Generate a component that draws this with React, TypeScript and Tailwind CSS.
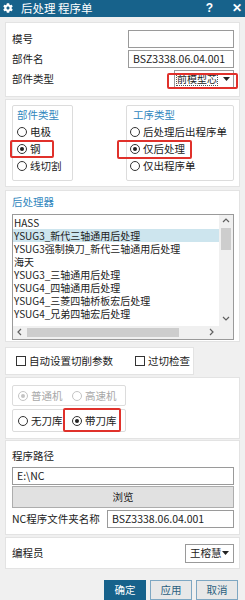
import { FaCog } from "react-icons/fa"

const font = "font-['Noto_Sans_CJK_SC','Noto_Sans',sans-serif]"

const Radio = ({ label, checked, disabled }: { label: string; checked?: boolean; disabled?: boolean }) => (
  <div className="flex items-center gap-[3px] h-[17px] whitespace-nowrap">
    <span
      className={`w-[10px] h-[10px] rounded-full border bg-white flex items-center justify-center shrink-0 ${
        disabled ? "border-[#c4c4c4]" : "border-[#333]"
      }`}
    >
      {checked && <span className={`w-[4px] h-[4px] rounded-full ${disabled ? "bg-[#c4c4c4]" : "bg-[#222]"}`} />}
    </span>
    <span className={disabled ? "text-[#a8a8a8]" : "text-[#222]"}>{label}</span>
  </div>
)

const Check = ({ label }: { label: string }) => (
  <div className="flex items-center gap-[3px] whitespace-nowrap">
    <span className="w-[10px] h-[10px] border border-[#333] bg-white shrink-0" />
    <span>{label}</span>
  </div>
)

const Chevron = ({ dir }: { dir: "up" | "down" | "left" | "right" }) => {
  const d = {
    up: "M1 5 L4 2 L7 5",
    down: "M1 2 L4 5 L7 2",
    left: "M5 1 L2 4 L5 7",
    right: "M2 1 L5 4 L2 7",
  }[dir]
  return (
    <svg width="8" height="8" viewBox="0 0 8 8">
      <path d={d} fill="none" stroke="#606060" strokeWidth="1.2" />
    </svg>
  )
}

const RedBox = ({ className }: { className: string }) => (
  <div className={`absolute border-2 border-[#e0312b] rounded-[2px] pointer-events-none ${className}`} />
)

const posts = [
  "HASS",
  "YSUG3_新代三轴通用后处理",
  "YSUG3强制换刀_新代三轴通用后处理",
  "海天",
  "YSUG3_三轴通用后处理",
  "YSUG4_四轴通用后处理",
  "YSUG4_三菱四轴桥板宏后处理",
  "YSUG4_兄弟四轴宏后处理",
]

export default function App() {
  return (
    <div className={`w-[245px] h-[600px] bg-[#f0f0f0] flex flex-col text-[10.5px] leading-none text-[#222] ${font}`}>
      {/* title bar */}
      <div className="h-[17px] bg-[#17628b] flex items-center pl-[3px] pr-[3px] text-white">
        <FaCog size={10} />
        <span className="ml-[8px] text-[11.5px]">后处理 程序单</span>
        <span className="ml-auto font-bold text-[12px] mr-[19px] font-['Liberation_Sans',sans-serif]">?</span>
        <span className="font-bold text-[12px] font-['Liberation_Sans',sans-serif]">✕</span>
      </div>

      {/* part info */}
      <div className="relative mt-[5px] mx-[5px] h-[75px] bg-white border border-[#e3e3e3] pt-[7px] pl-[6px] pr-[5px] flex flex-col gap-[2px]">
        <div className="flex items-center justify-between h-[18px]">
          <span>模号</span>
          <div className="w-[106px] h-[18px] border border-[#9a9a9a]" />
        </div>
        <div className="flex items-center justify-between h-[18px]">
          <span>部件名</span>
          <div className="w-[106px] h-[18px] border border-[#9a9a9a] flex items-center px-[4px]">BSZ3338.06.04.001</div>
        </div>
        <div className="flex items-center justify-between h-[19px]">
          <span>部件类型</span>
          <div className="w-[60px] h-[19px] border border-[#9a9a9a] flex items-center pl-[1px] pr-[3px] whitespace-nowrap">
            <span className="border border-dotted border-[#555] h-[13px] flex items-center text-[10px]">前模型芯</span>
            <svg className="ml-auto shrink-0" width="7" height="4" viewBox="0 0 7 4">
              <path d="M0 0 H7 L3.5 4 Z" fill="#222" />
            </svg>
          </div>
        </div>
        <RedBox className="left-[161px] top-[50px] w-[71px] h-[16px]" />
      </div>

      {/* type groups */}
      <div className="mt-[2px] mx-[5px] h-[88px] bg-white border border-[#e3e3e3] pt-[5px] pl-[6px] pr-[5px] flex">
        <div className="relative w-[61px] h-[76px] border border-[#dcdcdc] rounded-[2px] pl-[4px] pt-[3px]">
          <div className="text-[#2f86bd] h-[13px] flex items-center mb-[2px]">部件类型</div>
          <Radio label="电极" />
          <Radio label="钢" checked />
          <Radio label="线切割" />
          <RedBox className="left-[-3px] top-[34px] w-[44px] h-[18px]" />
        </div>
        <div className="relative ml-auto w-[108px] h-[76px] border border-[#dcdcdc] rounded-[2px] pl-[3px] pt-[3px]">
          <div className="text-[#2f86bd] h-[13px] flex items-center mb-[2px] pl-[3px]">工序类型</div>
          <Radio label="后处理后出程序单" />
          <Radio label="仅后处理" checked />
          <Radio label="仅出程序单" />
          <RedBox className="left-[-10px] top-[34px] w-[75px] h-[19px]" />
        </div>
      </div>

      {/* post processor list */}
      <div className="mt-[3px] mx-[5px] h-[153px] bg-white border border-[#e3e3e3] pt-[5px] pl-[6px] pr-[5px] flex flex-col">
        <div className="text-[#2f86bd] h-[13px] flex items-center">后处理器</div>
        <div className="mt-[5px] h-[126px] border border-[#9a9a9a] flex flex-col overflow-hidden">
          <div className="flex flex-1 min-h-0">
            <div className="flex-1 overflow-hidden pt-[1px] text-[10px]">
              {posts.map((p, i) => (
                <div
                  key={p}
                  className={`h-[13px] leading-[13px] pl-[1px] whitespace-nowrap ${i === 1 ? "bg-[#cde5ee]" : ""}`}
                >
                  {p}
                </div>
              ))}
            </div>
            <div className="w-[14px] bg-[#f0f0f0] flex flex-col items-center">
              <div className="h-[13px] flex items-center">
                <Chevron dir="up" />
              </div>
              <div className="w-[10px] h-[22px] bg-[#cdcdcd]" />
              <div className="mt-auto h-[13px] flex items-center">
                <Chevron dir="down" />
              </div>
            </div>
          </div>
          <div className="h-[13px] bg-[#f0f0f0] flex items-center">
            <div className="w-[14px] flex justify-center">
              <Chevron dir="left" />
            </div>
            <div className="w-[152px] h-[9px] bg-[#cdcdcd]" />
            <div className="ml-auto w-[14px] flex justify-center">
              <Chevron dir="right" />
            </div>
            <div className="w-[14px]" />
          </div>
        </div>
      </div>

      {/* checkboxes */}
      <div className="mt-[5px] ml-[5px] w-[189px] h-[28px] bg-white border border-[#e3e3e3] pl-[10px] flex items-center">
        <Check label="自动设置切削参数" />
        <div className="ml-[22px]">
          <Check label="过切检查" />
        </div>
      </div>

      {/* machine */}
      <div className="mt-[2px] mx-[5px] h-[62px] bg-white border border-[#e3e3e3] pt-[7px] pl-[6px] flex flex-col gap-[3px]">
        <div className="w-[114px] h-[21px] border border-[#dcdcdc] rounded-[2px] pl-[5px] flex items-center">
          <div className="w-[54px]">
            <Radio label="普通机" checked disabled />
          </div>
          <Radio label="高速机" disabled />
        </div>
        <div className="relative w-[114px] h-[23px] border border-[#dcdcdc] rounded-[2px] pl-[5px] flex items-center">
          <div className="w-[54px]">
            <Radio label="无刀库" />
          </div>
          <Radio label="带刀库" checked />
          <RedBox className="left-[50px] top-[-2px] w-[58px] h-[24px]" />
        </div>
      </div>

      {/* path */}
      <div className="mt-[1px] mx-[5px] h-[95px] bg-white border border-[#e3e3e3] pt-[9px] pl-[6px] pr-[5px] flex flex-col">
        <div className="h-[12px] flex items-center">程序路径</div>
        <div className="mt-[5px] h-[18px] border border-[#9a9a9a] flex items-center px-[4px]">E:\NC</div>
        <div className="mt-[1px] h-[22px] border border-[#adadad] bg-[#e1e1e1] flex items-center justify-center">浏览</div>
        <div className="mt-[2px] flex items-center justify-between">
          <span>NC程序文件夹名称</span>
          <div className="w-[127px] h-[18px] border border-[#9a9a9a] flex items-center px-[4px]">BSZ3338.06.04.001</div>
        </div>
      </div>

      {/* programmer */}
      <div className="mt-[2px] mx-[5px] h-[32px] bg-white border border-[#e3e3e3] pl-[6px] pr-[5px] flex items-center justify-between">
        <span>编程员</span>
        <div className="w-[49px] h-[19px] border border-[#9a9a9a] flex items-center pl-[4px] pr-[4px]">
          <span>王榕慧</span>
          <svg className="ml-auto" width="7" height="4" viewBox="0 0 7 4">
            <path d="M0 0 H7 L3.5 4 Z" fill="#222" />
          </svg>
        </div>
      </div>

      {/* buttons */}
      <div className="mt-[11px] flex justify-end gap-[4px] pr-[7px]">
        <button className="w-[42px] h-[20px] bg-[#17628b] text-white border border-[#17628b]">确定</button>
        <button className="w-[42px] h-[20px] bg-[#e8e8e8] text-[#2b5f7e] border border-[#7ea7c2]">应用</button>
        <button className="w-[42px] h-[20px] bg-[#e8e8e8] text-[#2b5f7e] border border-[#7ea7c2]">取消</button>
      </div>
    </div>
  )
}
